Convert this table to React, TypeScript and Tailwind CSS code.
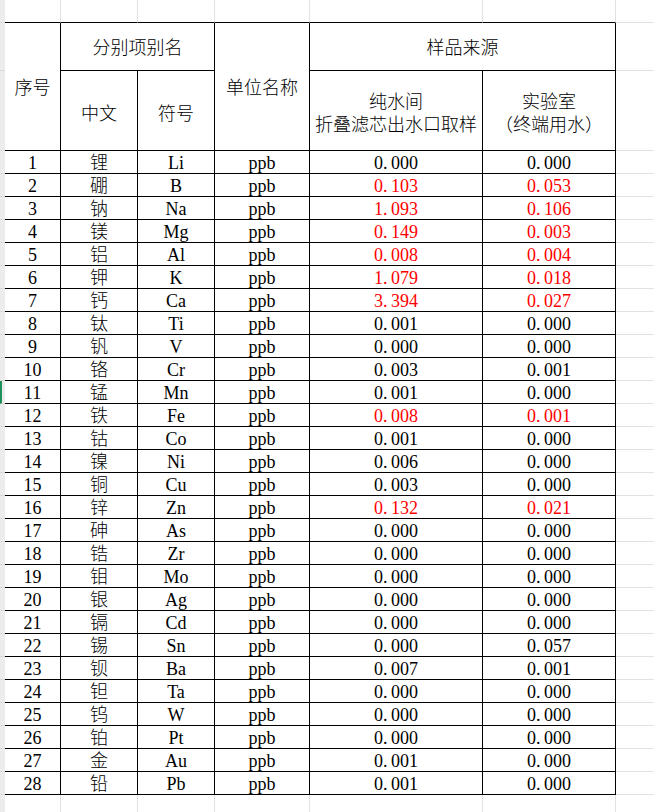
import { Fragment } from 'react';

type Row = { cn: string; sym: string; a: string; b: string; red?: boolean };

const rows: Row[] = [
  { cn: '锂', sym: 'Li', a: '0.000', b: '0.000' },
  { cn: '硼', sym: 'B', a: '0.103', b: '0.053', red: true },
  { cn: '钠', sym: 'Na', a: '1.093', b: '0.106', red: true },
  { cn: '镁', sym: 'Mg', a: '0.149', b: '0.003', red: true },
  { cn: '铝', sym: 'Al', a: '0.008', b: '0.004', red: true },
  { cn: '钾', sym: 'K', a: '1.079', b: '0.018', red: true },
  { cn: '钙', sym: 'Ca', a: '3.394', b: '0.027', red: true },
  { cn: '钛', sym: 'Ti', a: '0.001', b: '0.000' },
  { cn: '钒', sym: 'V', a: '0.000', b: '0.000' },
  { cn: '铬', sym: 'Cr', a: '0.003', b: '0.001' },
  { cn: '锰', sym: 'Mn', a: '0.001', b: '0.000' },
  { cn: '铁', sym: 'Fe', a: '0.008', b: '0.001', red: true },
  { cn: '钴', sym: 'Co', a: '0.001', b: '0.000' },
  { cn: '镍', sym: 'Ni', a: '0.006', b: '0.000' },
  { cn: '铜', sym: 'Cu', a: '0.003', b: '0.000' },
  { cn: '锌', sym: 'Zn', a: '0.132', b: '0.021', red: true },
  { cn: '砷', sym: 'As', a: '0.000', b: '0.000' },
  { cn: '锆', sym: 'Zr', a: '0.000', b: '0.000' },
  { cn: '钼', sym: 'Mo', a: '0.000', b: '0.000' },
  { cn: '银', sym: 'Ag', a: '0.000', b: '0.000' },
  { cn: '镉', sym: 'Cd', a: '0.000', b: '0.000' },
  { cn: '锡', sym: 'Sn', a: '0.000', b: '0.057' },
  { cn: '钡', sym: 'Ba', a: '0.007', b: '0.001' },
  { cn: '钽', sym: 'Ta', a: '0.000', b: '0.000' },
  { cn: '钨', sym: 'W', a: '0.000', b: '0.000' },
  { cn: '铂', sym: 'Pt', a: '0.000', b: '0.000' },
  { cn: '金', sym: 'Au', a: '0.001', b: '0.000' },
  { cn: '铅', sym: 'Pb', a: '0.001', b: '0.000' },
];

// black-bordered table cell
const cell = 'flex items-center justify-center border-r border-b border-black text-center';
const head = `${cell} font-['Noto_Sans_CJK_SC',sans-serif] font-light`;
const topCell = 'border-r border-[#e2e2e2] border-b border-b-black';
const gutter = 'bg-[#ececec] border-b border-[#d9d9d9]';

// SimSun-like number: the dot takes a half-width slot
function Num({ v }: { v: string }) {
  const [i, f] = v.split('.');
  return (
    <span>
      {i}
      <span className="inline-block w-[8px] text-left">.</span>
      {f}
    </span>
  );
}

export default function App() {
  return (
    <div className="w-[654px] h-[812px] overflow-hidden bg-white text-black text-[18px] font-['Liberation_Serif','Noto_Sans_CJK_SC',serif]">
      <div className="grid h-full grid-cols-[5px_56px_77px_77px_95px_173px_133px_1fr] grid-rows-[23px_48px_80px_repeat(28,23px)_1fr]">
        {/* top empty sheet row */}
        <div className={gutter} />
        <div className={topCell} />
        <div className={topCell} />
        <div className={topCell} />
        <div className={topCell} />
        <div className={topCell} />
        <div className={topCell} />
        <div className="border-b border-[#e2e2e2]" />

        {/* header */}
        <div className={gutter} />
        <div className={`${head} row-span-2`}>序号</div>
        <div className={`${head} col-span-2`}>分别项别名</div>
        <div className={`${head} row-span-2`}>单位名称</div>
        <div className={`${head} col-span-2`}>样品来源</div>
        <div className="border-b border-[#e2e2e2]" />

        <div className={gutter} />
        <div className={`${head} pt-[4px]`}>中文</div>
        <div className={`${head} pt-[4px]`}>符号</div>
        <div className={`${head} flex-col pt-[3px] leading-[23px]`}>
          <span>纯水间</span>
          <span>折叠滤芯出水口取样</span>
        </div>
        <div className={`${head} flex-col pt-[3px] leading-[23px]`}>
          <span>实验室</span>
          <span>（终端用水）</span>
        </div>
        <div className="border-b border-[#e2e2e2]" />

        {/* data rows */}
        {rows.map((r, i) => (
          <Fragment key={i}>
            <div className={i === 10 ? `${gutter} border-l-2 border-l-[#1d8f5c]` : gutter} />
            <div className={`${cell} pt-[3px]`}>{i + 1}</div>
            <div className={`${cell} pt-[3px] font-light`}>{r.cn}</div>
            <div className={`${cell} pt-[3px]`}>{r.sym}</div>
            <div className={`${cell} pt-[3px]`}>ppb</div>
            <div className={`${cell} pt-[3px] ${r.red ? 'text-[#ff0000]' : ''}`}>
              <Num v={r.a} />
            </div>
            <div className={`${cell} pt-[3px] ${r.red ? 'text-[#ff0000]' : ''}`}>
              <Num v={r.b} />
            </div>
            <div className="border-b border-[#e2e2e2]" />
          </Fragment>
        ))}

        {/* bottom empty sheet row */}
        <div className="bg-[#ececec]" />
        <div className="border-r border-[#e2e2e2]" />
        <div className="border-r border-[#e2e2e2]" />
        <div className="border-r border-[#e2e2e2]" />
        <div className="border-r border-[#e2e2e2]" />
        <div className="border-r border-[#e2e2e2]" />
        <div className="border-r border-[#e2e2e2]" />
        <div />
      </div>
    </div>
  );
}
